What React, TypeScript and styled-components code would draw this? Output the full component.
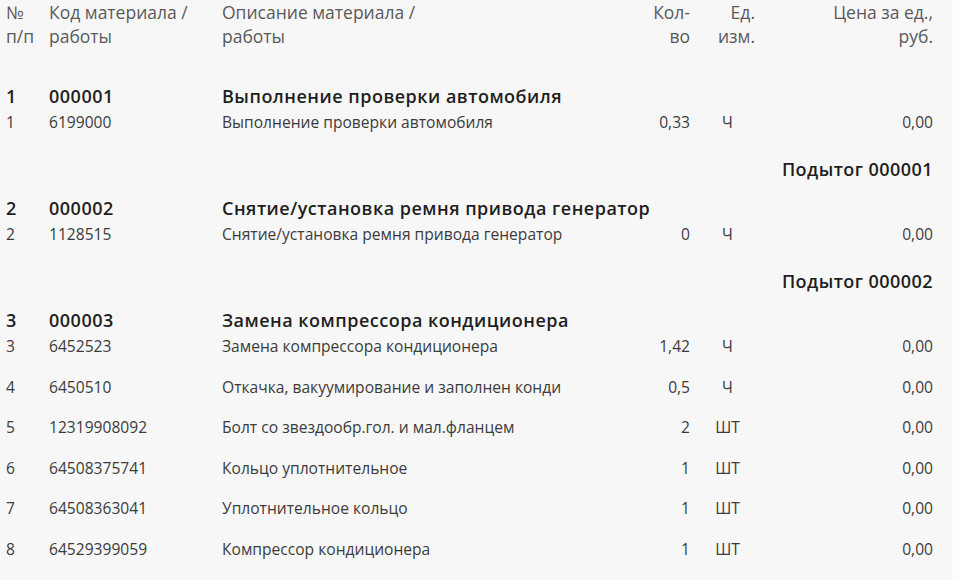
import React from 'react';
import styled, { createGlobalStyle } from 'styled-components';

const GlobalStyle = createGlobalStyle`
  html, body {
    margin: 0;
    padding: 0;
    background: #fdfdfd;
  }
  body {
    font-family: 'Open Sans', 'Noto Sans', sans-serif;
  }
`;

const COLS = '43px 173px 1fr 50px 75px 168px';

const Sheet = styled.div`
  width: 952px;
  height: 580px;
  background: #f7f7f7;
  box-sizing: border-box;
  padding: 0 19px 0 6px;
  overflow: hidden;
`;

const HeadRow = styled.div`
  display: grid;
  grid-template-columns: ${COLS};
  font-size: 17.5px;
  line-height: 24px;
  color: #5a5a5a;
  margin-bottom: 35px;
`;

const HeadCell = styled.div<{ $align?: 'left' | 'right'; $pr?: number }>`
  text-align: ${(p) => p.$align || 'left'};
  padding-right: ${(p) => p.$pr || 0}px;
  white-space: pre-line;
`;

const GroupRow = styled.div`
  display: grid;
  grid-template-columns: ${COLS};
  height: 26px;
  line-height: 26px;
  font-size: 18px;
  font-weight: 600;
  letter-spacing: 0.5px;
  color: #1e1e1e;
  white-space: nowrap;
`;

const ItemRow = styled.div`
  display: grid;
  grid-template-columns: ${COLS};
  height: 40.5px;
  line-height: 26px;
  font-size: 15.6px;
  color: #3c3c3c;
  white-space: nowrap;
`;

const Cell = styled.div<{ $align?: 'left' | 'right' | 'center' }>`
  text-align: ${(p) => p.$align || 'left'};
  overflow: visible;
`;

const SubtotalRow = styled.div`
  height: 45.5px;
  box-sizing: border-box;
  padding-top: 6.5px;
  line-height: 26px;
  font-size: 18px;
  font-weight: 600;
  letter-spacing: 0.45px;
  color: #1e1e1e;
  text-align: right;
`;

type Item = {
  n: number;
  code: string;
  name: string;
  qty: string;
  unit: string;
  price: string;
};

type Group = {
  n: number;
  code: string;
  name: string;
  items: Item[];
  subtotal?: boolean;
};

const groups: Group[] = [
  {
    n: 1,
    code: '000001',
    name: 'Выполнение проверки автомобиля',
    subtotal: true,
    items: [
      { n: 1, code: '6199000', name: 'Выполнение проверки автомобиля', qty: '0,33', unit: 'Ч', price: '0,00' },
    ],
  },
  {
    n: 2,
    code: '000002',
    name: 'Снятие/установка ремня привода генератор',
    subtotal: true,
    items: [
      { n: 2, code: '1128515', name: 'Снятие/установка ремня привода генератор', qty: '0', unit: 'Ч', price: '0,00' },
    ],
  },
  {
    n: 3,
    code: '000003',
    name: 'Замена компрессора кондиционера',
    items: [
      { n: 3, code: '6452523', name: 'Замена компрессора кондиционера', qty: '1,42', unit: 'Ч', price: '0,00' },
      { n: 4, code: '6450510', name: 'Откачка, вакуумирование и заполнен конди', qty: '0,5', unit: 'Ч', price: '0,00' },
      { n: 5, code: '12319908092', name: 'Болт со звездообр.гол. и мал.фланцем', qty: '2', unit: 'ШТ', price: '0,00' },
      { n: 6, code: '64508375741', name: 'Кольцо уплотнительное', qty: '1', unit: 'ШТ', price: '0,00' },
      { n: 7, code: '64508363041', name: 'Уплотнительное кольцо', qty: '1', unit: 'ШТ', price: '0,00' },
      { n: 8, code: '64529399059', name: 'Компрессор кондиционера', qty: '1', unit: 'ШТ', price: '0,00' },
    ],
  },
];

const App = () => {
  return (
    <>
      <GlobalStyle />
      <Sheet>
        <HeadRow>
          <HeadCell>{'№\nп/п'}</HeadCell>
          <HeadCell>{'Код материала /\nработы'}</HeadCell>
          <HeadCell>{'Описание материала /\nработы'}</HeadCell>
          <HeadCell $align="right" $pr={-3}>{'Кол-\nво'}</HeadCell>
          <HeadCell $align="right" $pr={10}>{'Ед.\nизм.'}</HeadCell>
          <HeadCell $align="right" $pr={-2}>{'Цена за ед.,\nруб.'}</HeadCell>
        </HeadRow>
        {groups.map((g) => (
          <React.Fragment key={g.code}>
            <GroupRow>
              <Cell>{g.n}</Cell>
              <Cell>{g.code}</Cell>
              <Cell>{g.name}</Cell>
            </GroupRow>
            {g.items.map((it) => (
              <ItemRow key={it.n}>
                <Cell>{it.n}</Cell>
                <Cell>{it.code}</Cell>
                <Cell>{it.name}</Cell>
                <Cell $align="right">{it.qty}</Cell>
                <Cell $align="center">{it.unit}</Cell>
                <Cell $align="right">{it.price}</Cell>
              </ItemRow>
            ))}
            {g.subtotal && <SubtotalRow>Подытог {g.code}</SubtotalRow>}
          </React.Fragment>
        ))}
      </Sheet>
    </>
  );
};

export default App;
